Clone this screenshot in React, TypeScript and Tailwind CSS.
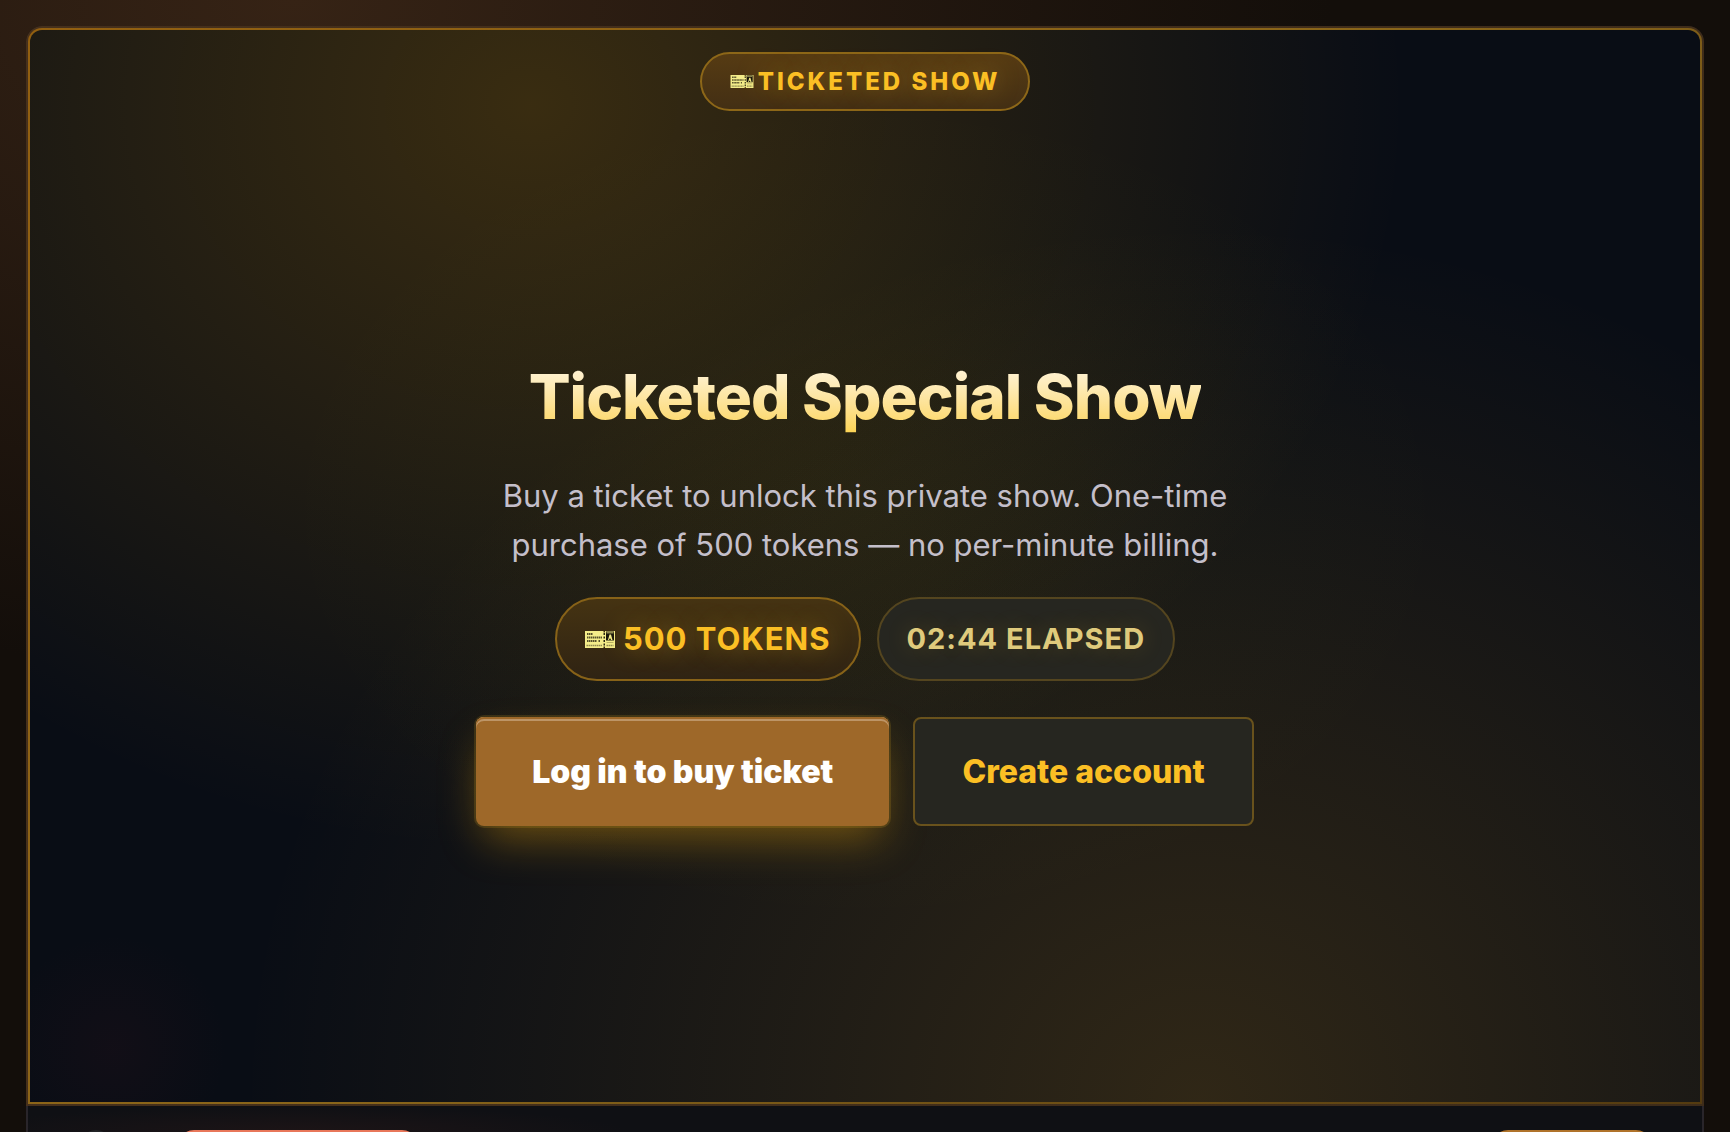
function TicketIcon({ className }: { className: string }) {
  return (
    <svg viewBox="0 0 60 34" className={className} aria-hidden="true">
      <path d="M0 0H37V3H40V0H60V34H40V31H37V34H0Z" fill="#f3ec8a" />
      <path d="M42 1H58V19H42Z" fill="#17150c" />
      <path d="M43 2H57V5H43Z" fill="#8d8850" />
      <path d="M46 18L49 7H52L55 18H52L51 15H49L48 18Z" fill="#f3ec8a" />
      <path d="M38.500 4V31" stroke="#2a2712" strokeWidth="3" strokeDasharray="4 3" />
      <g stroke="#55502a" strokeWidth="4" fill="none">
        <path d="M4 6H16" strokeDasharray="3 1" />
        <path d="M4 13H34" strokeDasharray="3 1" />
        <path d="M4 20H24M27 20H30" strokeDasharray="3 1" />
      </g>
      <path d="M3 29H35M43 29H57" stroke="#8f8950" strokeWidth="3" strokeDasharray="3 1" />
      <path d="M43 23H57" stroke="#b5ae62" strokeWidth="2" />
    </svg>
  );
}

export default function App() {
  return (
    <div className="flex h-screen flex-col overflow-hidden bg-[#130e0a] bg-[radial-gradient(ellipse_60%_60%_at_17%_0%,#362315,transparent)] px-[26px] pt-[26px] font-['Inter',sans-serif]">
      <main className="flex min-h-0 flex-1 flex-col rounded-t-2xl bg-[#0f1014]">
        <section className="flex flex-1 flex-col rounded-t-2xl bg-[linear-gradient(100deg,#46301c,#3e2c1a)] p-0.5">
          <div className="flex flex-1 flex-col rounded-t-[14px] bg-[linear-gradient(135deg,#925f10,#8a661a_50%,#543b10)] p-0.5">
            <div className="flex flex-1 flex-col items-center rounded-t-xl bg-[#090d15] bg-[radial-gradient(ellipse_at_30%_7%,rgba(250,170,0,0.2),transparent_53%),radial-gradient(ellipse_at_70%_100%,rgba(250,175,30,0.16),transparent_58%),radial-gradient(ellipse_at_50%_45%,rgba(170,200,0,0.04),transparent_50%),radial-gradient(circle_at_5%_95%,rgba(120,30,40,0.08),transparent_6%)] pt-[22px]">
              <div className="flex h-[59px] items-center gap-1 rounded-full border-2 border-[#8d6718] bg-[linear-gradient(to_bottom,#563b13,#432f14)] px-7 text-2xl font-extrabold uppercase tracking-[3px] text-[#fbbf24] [text-shadow:0_0_24px_rgba(251,191,36,0.35)]">
                <TicketIcon className="h-[13px] w-6" />
                <span>Ticketed Show</span>
              </div>

              <div className="mt-[248px] flex flex-col items-center">
                <h1 className="bg-linear-to-b from-[#fff7e6] to-[#fcd34d] bg-clip-text text-[62px] leading-[76px] font-extrabold tracking-[-1px] text-transparent">
                  Ticketed Special Show
                </h1>
                <p className="mt-9 max-w-[760px] text-center text-[31px] leading-[49px] text-[#c4bfca]">
                  Buy a ticket to unlock this private show. One-time purchase of 500 tokens — no per-minute billing.
                </p>
                <div className="mt-7 flex gap-4">
                  <div className="flex h-[84px] items-center gap-2 rounded-full border-2 border-[#876218] bg-[linear-gradient(to_bottom,#453312,#2f2313)] px-7 text-[31px] font-bold tracking-[1px] text-[#fbbf24] [text-shadow:0_0_24px_rgba(251,191,36,0.35)]">
                    <TicketIcon className="h-[17px] w-[30px]" />
                    <span>500 TOKENS</span>
                  </div>
                  <div className="flex h-[84px] items-center rounded-full border-2 border-[#54451f] bg-[#262620] px-7 text-[29px] font-bold tracking-[1px] text-[#dfca7c] [text-shadow:0_0_24px_rgba(251,191,36,0.2)]">
                    02:44 ELAPSED
                  </div>
                </div>
                <div className="mt-9 flex gap-6">
                  <button className="h-[109px] rounded-lg bg-[#9e6829] px-14 text-[32px] font-black text-white shadow-[0_0_0_2px_rgba(251,191,36,0.14),0_20px_44px_-8px_rgba(245,170,11,0.4),inset_0_2px_0_0_#9e6829,inset_0_4px_0_0_#bd9567]">
                    Log in to buy ticket
                  </button>
                  <button className="h-[109px] rounded-lg border-2 border-[#69521c] bg-[#262620] px-[47px] text-[32px] font-extrabold text-[#fbbf24]">
                    Create account
                  </button>
                </div>
              </div>
            </div>
          </div>
        </section>
        <footer className="flex h-[26px] shrink-0 items-start border-x-2 border-[#29252a] bg-[radial-gradient(ellipse_20%_100%_at_16%_100%,#1c1416,transparent)] pt-6">
          <span className="ml-[52px] h-8 w-8 shrink-0 rounded-full bg-[#222326]" />
          <span className="ml-[66px] h-14 w-[240px] shrink-0 rounded-2xl bg-[#e8775a]" />
          <span className="mr-[50px] ml-auto h-14 w-[160px] shrink-0 rounded-2xl bg-[#b0732a]" />
        </footer>
      </main>
    </div>
  );
}
